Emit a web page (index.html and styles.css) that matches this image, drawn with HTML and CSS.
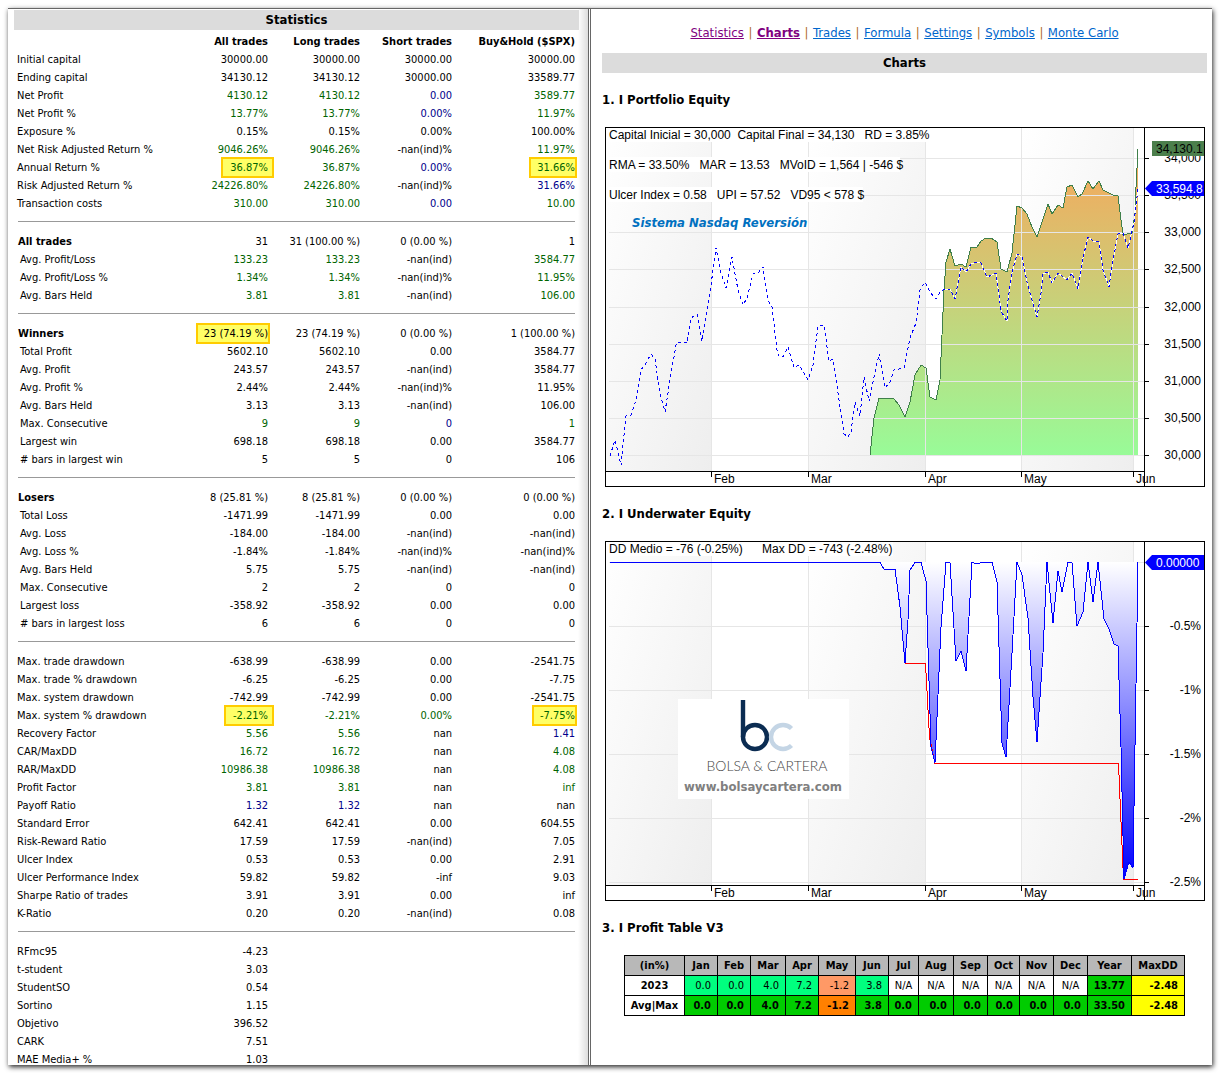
FILE: index.html
```html
<!DOCTYPE html>
<html lang="en">
<head>
<meta charset="utf-8">
<title>Backtest report</title>
<link rel="stylesheet" href="styles.css">
</head>
<body>
<main class="window">
<section class="pane stats-pane">
<h2 class="bar">Statistics</h2>
<table class="stats">
<colgroup><col><col class="num"><col class="num"><col class="num"><col class="wide"></colgroup>
<thead><tr><td></td><th scope="col">All trades</th><th scope="col">Long trades</th><th scope="col">Short trades</th><th scope="col">Buy&amp;Hold ($SPX)</th></tr></thead>
<tbody>
<tr><th scope="row">Initial capital</th><td>30000.00</td><td>30000.00</td><td>30000.00</td><td>30000.00</td></tr>
<tr><th scope="row">Ending capital</th><td>34130.12</td><td>34130.12</td><td>30000.00</td><td>33589.77</td></tr>
<tr><th scope="row">Net Profit</th><td class="good">4130.12</td><td class="good">4130.12</td><td class="flat">0.00</td><td class="good">3589.77</td></tr>
<tr><th scope="row">Net Profit %</th><td class="good">13.77%</td><td class="good">13.77%</td><td class="flat">0.00%</td><td class="good">11.97%</td></tr>
<tr><th scope="row">Exposure %</th><td>0.15%</td><td>0.15%</td><td>0.00%</td><td>100.00%</td></tr>
<tr><th scope="row">Net Risk Adjusted Return %</th><td class="good">9046.26%</td><td class="good">9046.26%</td><td>-nan(ind)%</td><td class="good">11.97%</td></tr>
<tr><th scope="row">Annual Return %</th><td class="good"><mark>36.87%</mark></td><td class="good">36.87%</td><td class="flat">0.00%</td><td class="good"><mark class="tight">31.66%</mark></td></tr>
<tr><th scope="row">Risk Adjusted Return %</th><td class="good">24226.80%</td><td class="good">24226.80%</td><td>-nan(ind)%</td><td class="flat">31.66%</td></tr>
<tr><th scope="row">Transaction costs</th><td class="good">310.00</td><td class="good">310.00</td><td class="flat">0.00</td><td class="good">10.00</td></tr>
<tr class="rule"><td colspan="5"><hr></td></tr>
</tbody>
<tbody class="group">
<tr><th scope="row">All trades</th><td>31</td><td>31 (100.00 %)</td><td>0 (0.00 %)</td><td>1</td></tr>
<tr><th scope="row">Avg. Profit/Loss</th><td class="good">133.23</td><td class="good">133.23</td><td>-nan(ind)</td><td class="good">3584.77</td></tr>
<tr><th scope="row">Avg. Profit/Loss %</th><td class="good">1.34%</td><td class="good">1.34%</td><td>-nan(ind)%</td><td class="good">11.95%</td></tr>
<tr><th scope="row">Avg. Bars Held</th><td class="good">3.81</td><td class="good">3.81</td><td>-nan(ind)</td><td class="good">106.00</td></tr>
<tr class="rule"><td colspan="5"><hr></td></tr>
</tbody>
<tbody class="group">
<tr><th scope="row">Winners</th><td><mark class="tight">23 (74.19 %)</mark></td><td>23 (74.19 %)</td><td>0 (0.00 %)</td><td>1 (100.00 %)</td></tr>
<tr><th scope="row">Total Profit</th><td>5602.10</td><td>5602.10</td><td>0.00</td><td>3584.77</td></tr>
<tr><th scope="row">Avg. Profit</th><td>243.57</td><td>243.57</td><td>-nan(ind)</td><td>3584.77</td></tr>
<tr><th scope="row">Avg. Profit %</th><td>2.44%</td><td>2.44%</td><td>-nan(ind)%</td><td>11.95%</td></tr>
<tr><th scope="row">Avg. Bars Held</th><td>3.13</td><td>3.13</td><td>-nan(ind)</td><td>106.00</td></tr>
<tr><th scope="row">Max. Consecutive</th><td class="good">9</td><td class="good">9</td><td class="flat">0</td><td class="good">1</td></tr>
<tr><th scope="row">Largest win</th><td>698.18</td><td>698.18</td><td>0.00</td><td>3584.77</td></tr>
<tr><th scope="row"># bars in largest win</th><td>5</td><td>5</td><td>0</td><td>106</td></tr>
<tr class="rule"><td colspan="5"><hr></td></tr>
</tbody>
<tbody class="group">
<tr><th scope="row">Losers</th><td>8 (25.81 %)</td><td>8 (25.81 %)</td><td>0 (0.00 %)</td><td>0 (0.00 %)</td></tr>
<tr><th scope="row">Total Loss</th><td>-1471.99</td><td>-1471.99</td><td>0.00</td><td>0.00</td></tr>
<tr><th scope="row">Avg. Loss</th><td>-184.00</td><td>-184.00</td><td>-nan(ind)</td><td>-nan(ind)</td></tr>
<tr><th scope="row">Avg. Loss %</th><td>-1.84%</td><td>-1.84%</td><td>-nan(ind)%</td><td>-nan(ind)%</td></tr>
<tr><th scope="row">Avg. Bars Held</th><td>5.75</td><td>5.75</td><td>-nan(ind)</td><td>-nan(ind)</td></tr>
<tr><th scope="row">Max. Consecutive</th><td>2</td><td>2</td><td>0</td><td>0</td></tr>
<tr><th scope="row">Largest loss</th><td>-358.92</td><td>-358.92</td><td>0.00</td><td>0.00</td></tr>
<tr><th scope="row"># bars in largest loss</th><td>6</td><td>6</td><td>0</td><td>0</td></tr>
<tr class="rule"><td colspan="5"><hr></td></tr>
</tbody>
<tbody>
<tr><th scope="row">Max. trade drawdown</th><td>-638.99</td><td>-638.99</td><td>0.00</td><td>-2541.75</td></tr>
<tr><th scope="row">Max. trade % drawdown</th><td>-6.25</td><td>-6.25</td><td>0.00</td><td>-7.75</td></tr>
<tr><th scope="row">Max. system drawdown</th><td>-742.99</td><td>-742.99</td><td>0.00</td><td>-2541.75</td></tr>
<tr><th scope="row">Max. system % drawdown</th><td class="good"><mark>-2.21%</mark></td><td class="good">-2.21%</td><td class="good">0.00%</td><td class="good"><mark class="tight">-7.75%</mark></td></tr>
<tr><th scope="row">Recovery Factor</th><td class="good">5.56</td><td class="good">5.56</td><td>nan</td><td class="flat">1.41</td></tr>
<tr><th scope="row">CAR/MaxDD</th><td class="good">16.72</td><td class="good">16.72</td><td>nan</td><td class="good">4.08</td></tr>
<tr><th scope="row">RAR/MaxDD</th><td class="good">10986.38</td><td class="good">10986.38</td><td>nan</td><td class="good">4.08</td></tr>
<tr><th scope="row">Profit Factor</th><td class="good">3.81</td><td class="good">3.81</td><td>nan</td><td class="good">inf</td></tr>
<tr><th scope="row">Payoff Ratio</th><td class="flat">1.32</td><td class="flat">1.32</td><td>nan</td><td>nan</td></tr>
<tr><th scope="row">Standard Error</th><td>642.41</td><td>642.41</td><td>0.00</td><td>604.55</td></tr>
<tr><th scope="row">Risk-Reward Ratio</th><td>17.59</td><td>17.59</td><td>-nan(ind)</td><td>7.05</td></tr>
<tr><th scope="row">Ulcer Index</th><td>0.53</td><td>0.53</td><td>0.00</td><td>2.91</td></tr>
<tr><th scope="row">Ulcer Performance Index</th><td>59.82</td><td>59.82</td><td>-inf</td><td>9.03</td></tr>
<tr><th scope="row">Sharpe Ratio of trades</th><td>3.91</td><td>3.91</td><td>0.00</td><td>inf</td></tr>
<tr><th scope="row">K-Ratio</th><td>0.20</td><td>0.20</td><td>-nan(ind)</td><td>0.08</td></tr>
<tr class="rule"><td colspan="5"><hr></td></tr>
</tbody>
<tbody>
<tr><th scope="row">RFmc95</th><td>-4.23</td></tr>
<tr><th scope="row">t-student</th><td>3.03</td></tr>
<tr><th scope="row">StudentSO</th><td>0.54</td></tr>
<tr><th scope="row">Sortino</th><td>1.15</td></tr>
<tr><th scope="row">Objetivo</th><td>396.52</td></tr>
<tr><th scope="row">CARK</th><td>7.51</td></tr>
<tr><th scope="row">MAE Media+ %</th><td>1.03</td></tr>
</tbody>
</table>
</section>

<section class="pane charts-pane">
<nav class="tabs">
<a class="seen" href="#statistics">Statistics</a><span class="sep">|</span>
<a class="seen current" href="#charts">Charts</a><span class="sep">|</span>
<a href="#trades">Trades</a><span class="sep">|</span>
<a href="#formula">Formula</a><span class="sep">|</span>
<a href="#settings">Settings</a><span class="sep">|</span>
<a href="#symbols">Symbols</a><span class="sep">|</span>
<a href="#montecarlo">Monte Carlo</a>
</nav>
<h2 class="bar">Charts</h2>

<h3>1. I Portfolio Equity</h3>
<svg class="chart" viewBox="605 127 600 360" role="img" aria-label="Portfolio equity">
<defs>
<linearGradient id="band" x1="0" y1="0" x2="1" y2="1"><stop offset="0" stop-color="#fff"/><stop offset="1" stop-color="#eee"/></linearGradient>
<linearGradient id="equity" gradientUnits="userSpaceOnUse" x1="0" y1="160" x2="0" y2="455"><stop offset="0" stop-color="#f4a95d"/><stop offset="1" stop-color="#98fb98"/></linearGradient>
</defs>
<rect x="605" y="127" width="600" height="360" fill="#fff"/>
<g fill="url(#band)"><rect x="606" y="128" width="105" height="343"/><rect x="809" y="128" width="116" height="343"/><rect x="1022" y="128" width="111" height="343"/></g>
<path d="M870 455L874 418L879 398L894 399L899 405L905 417L910 402L915 375L921 365L926 368L930 397L936 400L940 380L944 290L946 262L950 249L955 266L961 264L966 267L971 247L977 247L981 241L986 238L991 238L997 242L1001 269L1007 272L1012 253L1017 206L1022 208L1027 214L1032 227L1037 237L1043 219L1048 204L1052 214L1058 205L1063 208L1067 187L1072 185L1078 197L1082 194L1088 181L1093 189L1099 181L1103 190L1113 195L1118 196L1123 235L1132 233L1135 213L1136 187L1138 149V455Z" fill="url(#equity)"/>
<path class="grid" d="M609 158.500H1144M609 195.500H1144M609 232.500H1144M609 269.500H1144M609 307.500H1144M609 344.500H1144M609 381.500H1144M609 418.500H1144M609 455.500H1144M711.500 128V471M808.500 128V471M925.500 128V471M1021.500 128V471M1133.500 128V471"/>
<path class="line" stroke="#3f7f4a" d="M870 455L874 418L879 398L894 399L899 405L905 417L910 402L915 375L921 365L926 368L930 397L936 400L940 380L944 290L946 262L950 249L955 266L961 264L966 267L971 247L977 247L981 241L986 238L991 238L997 242L1001 269L1007 272L1012 253L1017 206L1022 208L1027 214L1032 227L1037 237L1043 219L1048 204L1052 214L1058 205L1063 208L1067 187L1072 185L1078 197L1082 194L1088 181L1093 189L1099 181L1103 190L1113 195L1118 196L1123 235L1132 233L1135 213L1136 187L1138 149"/>
<path class="line" stroke="#fff" d="M945 289L950 289L955 299L961 267L966 272L971 264L977 262L981 263L987 277L992 275L996 273L1001 310L1002 313L1007 321L1008 300L1012 273L1017 254L1022 257L1027 282L1032 300L1037 317L1041 293L1043 274L1048 272L1052 283L1058 273L1067 280L1072 273L1078 289L1083 258L1088 237L1093 241L1099 242L1103 270L1109 287L1113 260L1118 234L1123 233L1128 248L1134 223L1136 205L1138 189"/>
<path class="line dashed" stroke="#00f" d="M610 456L615 440L621 465L626 416L631 415L636 400L641 370L646 363L651 354L655 359L660 393L665 412L670 380L676 345L677 342L687 343L691 318L697 314L702 341L709 297L711 285L716 248L721 273L726 288L732 257L738 290L743 305L747 298L753 274L758 273L763 267L767 295L769 302L772 307L777 350L779 356L783 357L788 347L794 368L799 365L808 380L813 365L818 326L824 325L829 361L833 359L839 400L844 434L848 437L851 432L855 402L860 416L864 377L869 401L879 354L885 388L890 382L894 370L904 368L910 338L916 323L920 290L925 282L930 292L936 299L941 291L945 289L950 289L955 299L961 267L966 272L971 264L977 262L981 263L987 277L992 275L996 273L1001 310L1002 313L1007 321L1008 300L1012 273L1017 254L1022 257L1027 282L1032 300L1037 317L1041 293L1043 274L1048 272L1052 283L1058 273L1067 280L1072 273L1078 289L1083 258L1088 237L1093 241L1099 242L1103 270L1109 287L1113 260L1118 234L1123 233L1128 248L1134 223L1136 205L1138 189"/>
<g fill="#fff"><rect x="608" y="128" width="329" height="14"/><rect x="608" y="157" width="292" height="15"/><rect x="608" y="187" width="255" height="15"/></g>
<g class="note"><text x="609" y="139">Capital Inicial = 30,000&#160; Capital Final = 34,130&#160;&#160; RD = 3.85%</text><text x="609" y="169">RMA = 33.50%&#160;&#160; MAR = 13.53&#160;&#160; MVoID = 1,564 | -546 $</text><text x="609" y="199">Ulcer Index = 0.58&#160;&#160; UPI = 57.52&#160;&#160; VD95 &lt; 578 $</text></g>
<text class="caption" x="632" y="227">Sistema Nasdaq Reversión</text>
<g class="ylabels"><text x="1201" y="162">34,000</text><text x="1201" y="199">33,500</text><text x="1201" y="236">33,000</text><text x="1201" y="273">32,500</text><text x="1201" y="311">32,000</text><text x="1201" y="348">31,500</text><text x="1201" y="385">31,000</text><text x="1201" y="422">30,500</text><text x="1201" y="459">30,000</text></g>
<g class="note"><text x="714" y="483">Feb</text><text x="811" y="483">Mar</text><text x="928" y="483">Apr</text><text x="1024" y="483">May</text><text x="1136" y="483">Jun</text></g>
<path class="axis" d="M1144.500 128V487M605 471.500H1144M1144 158.500H1149M1144 195.500H1149M1144 232.500H1149M1144 269.500H1149M1144 307.500H1149M1144 344.500H1149M1144 381.500H1149M1144 418.500H1149M1144 455.500H1149M711.500 471V477M808.500 471V477M925.500 471V477M1021.500 471V477M1133.500 471V477"/>
<rect x="1152" y="141" width="53" height="15" fill="#4c7f4c"/>
<path d="M1145 188.500L1152 181H1205V196H1152Z" fill="#00f"/>
<text class="tag" x="1156" y="153">34,130.1</text><text class="tag light" x="1156" y="193">33,594.8</text>
<rect class="axis" x="605.500" y="127.500" width="599" height="359"/>
</svg>

<h3>2. I Underwater Equity</h3>
<svg class="chart" viewBox="605 541 600 360" role="img" aria-label="Underwater equity">
<defs><linearGradient id="water" gradientUnits="userSpaceOnUse" x1="0" y1="562" x2="0" y2="879"><stop offset="0" stop-color="#fff"/><stop offset="1" stop-color="#00f"/></linearGradient></defs>
<rect x="605" y="541" width="600" height="360" fill="#fff"/>
<g fill="url(#band)"><rect x="606" y="542" width="105" height="343"/><rect x="809" y="542" width="116" height="343"/><rect x="1022" y="542" width="111" height="343"/></g>
<path class="grid" d="M609 562.500H1144M609 626.500H1144M609 690.500H1144M609 754.500H1144M609 818.500H1144M609 882.500H1144M711.500 542V885M808.500 542V885M925.500 542V885M1021.500 542V885M1133.500 542V885"/>
<path d="M880 562L884 569L895 569L900 607L905 663L908 620L910 570L915 562L921 562L926 581L931 747L935 763L941 627L946 562L950 562L956 661L961 651L966 671L972 562L977 564L982 562L992 562L997 582L1002 743L1006 757L1012 653L1017 562L1022 575L1028 618L1033 697L1037 742L1043 653L1047 562L1053 623L1058 571L1062 592L1068 562L1072 562L1077 626L1083 612L1088 562L1093 602L1098 562L1104 619L1109 629L1114 644L1118 646L1121 747L1124 879L1129 862L1133 868L1138 562Z" fill="url(#water)"/>
<path class="line" stroke="#f00" d="M905 663.500H925.500L929.500 737L935 763.500H1118.500L1123 868L1124 879.500H1138"/>
<path class="line" stroke="#00f" d="M610 562.500L880 562.500L884 569L895 569L900 607L905 663L908 620L910 570L915 562.500L921 562.500L926 581L931 747L935 763L941 627L946 562.500L950 562.500L956 661L961 651L966 671L972 562.500L977 564L982 562.500L992 562.500L997 582L1002 743L1006 757L1012 653L1017 562L1022 575L1028 618L1033 697L1037 742L1043 653L1047 562L1053 623L1058 571L1062 592L1068 562.500L1072 562.500L1077 626L1083 612L1088 562L1093 602L1098 562L1104 619L1109 629L1114 644L1118 646L1121 747L1124 879L1129 862L1133 868L1138 562"/>
<rect x="608" y="542" width="285" height="14" fill="#fff"/>
<g class="note"><text x="609" y="553">DD Medio = -76 (-0.25%)</text><text x="762" y="553">Max DD = -743 (-2.48%)</text></g>
<g class="ylabels"><text x="1201" y="630">-0.5%</text><text x="1201" y="694">-1%</text><text x="1201" y="758">-1.5%</text><text x="1201" y="822">-2%</text><text x="1201" y="886">-2.5%</text></g>
<g class="note"><text x="714" y="897">Feb</text><text x="811" y="897">Mar</text><text x="928" y="897">Apr</text><text x="1024" y="897">May</text><text x="1136" y="897">Jun</text></g>
<path class="axis" d="M1144.500 542V901M605 885.500H1144M1144 626.500H1149M1144 690.500H1149M1144 754.500H1149M1144 818.500H1149M1144 882.500H1149M711.500 885V891M808.500 885V891M925.500 885V891M1021.500 885V891M1133.500 885V891"/>
<path d="M1145 562.500L1152 555H1205V570H1152Z" fill="#00f"/>
<text class="tag light" x="1156" y="567">0.00000</text>
<rect class="axis" x="605.500" y="541.500" width="599" height="359"/>
<rect x="678" y="699" width="171" height="100" fill="#fff"/>
<path d="M743 700V737" stroke="#0b2c52" stroke-width="4.400" fill="none"/><circle cx="755" cy="737" r="12" stroke="#0b2c52" stroke-width="4.400" fill="none"/>
<path d="M791.500 728.500A12 12 0 1 0 791.500 745.500" stroke="#c4d5e5" stroke-width="4.400" fill="none"/>
<text class="brand" x="767" y="771">BOLSA &amp; CARTERA</text>
<text class="site" x="763" y="791">www.bolsaycartera.com</text>
</svg>

<h3>3. I Profit Table V3</h3>
<table class="profit">
<colgroup><col style="width:60px"><col style="width:33px"><col style="width:33px"><col style="width:35px"><col style="width:33px"><col style="width:37px"><col style="width:33px"><col style="width:30px"><col style="width:35px"><col style="width:34px"><col style="width:32px"><col style="width:34px"><col style="width:34px"><col style="width:44px"><col style="width:53px"></colgroup>
<thead><tr><th>(in%)</th><th>Jan</th><th>Feb</th><th>Mar</th><th>Apr</th><th>May</th><th>Jun</th><th>Jul</th><th>Aug</th><th>Sep</th><th>Oct</th><th>Nov</th><th>Dec</th><th>Year</th><th>MaxDD</th></tr></thead>
<tbody>
<tr><th scope="row">2023</th><td class="up">0.0</td><td class="up">0.0</td><td class="up">4.0</td><td class="up">7.2</td><td class="down">-1.2</td><td class="up">3.8</td><td class="na">N/A</td><td class="na">N/A</td><td class="na">N/A</td><td class="na">N/A</td><td class="na">N/A</td><td class="na">N/A</td><td class="total">13.77</td><td class="maxdd">-2.48</td></tr>
<tr><th scope="row">Avg|Max</th><td class="total">0.0</td><td class="total">0.0</td><td class="total">4.0</td><td class="total">7.2</td><td class="total low">-1.2</td><td class="total">3.8</td><td class="total">0.0</td><td class="total">0.0</td><td class="total">0.0</td><td class="total">0.0</td><td class="total">0.0</td><td class="total">0.0</td><td class="total">33.50</td><td class="maxdd">-2.48</td></tr>
</tbody>
</table>
</section>
</main>
</body>
</html>
```
FILE: styles.css
```css
* { box-sizing: border-box; }

body {
  margin: 0;
  padding: 8px;
  background: #fff;
  color: #000;
  font: 11px/18px "DejaVu Sans Condensed", "DejaVu Sans", sans-serif;
}

.window {
  display: grid;
  grid-template-columns: 583fr 621fr;
  height: calc(100vh - 16px);
  border-top: 1px solid #666;
  background: #fff;
  box-shadow: 1px 2px 5px rgba(0, 0, 0, .85);
}

.pane {
  min-width: 0;
  overflow: auto;
  scrollbar-width: none;
}

.stats-pane {
  padding: 1px 9px 0 6px;
  border-right: 3px double #666;
  background: linear-gradient(to left, #ddd, #fff 10px);
}

.charts-pane { padding: 15px 5px 0 11px; }

.bar {
  margin: 0;
  background: #dcdcdc;
  font-size: 13px;
  line-height: 20px;
  text-align: center;
}

h3 {
  margin: 0;
  font-size: 13px;
  line-height: 54px;
}

/* Statistics */
.stats {
  width: calc(100% - 7px);
  margin: 3px 4px 0 3px;
  border-collapse: collapse;
  table-layout: fixed;
}

.num { width: 92px; }
.wide { width: 123px; }

.stats th,
.stats td {
  height: 18px;
  padding: 0;
  text-align: right;
  white-space: nowrap;
}

.stats tbody th {
  font-weight: normal;
  text-align: left;
}

.stats .group th { padding-left: 3px; }

.stats .group tr:first-child th {
  padding-left: 1px;
  font-weight: bold;
}

.stats .rule td {
  height: 20px;
  line-height: 1px;
  vertical-align: top;
}

hr {
  height: 1px;
  margin: 8px 0 0 1px;
  border: 0;
  background: #999;
}

.good { color: #006400; }
.flat { color: #00008b; }

mark {
  margin-right: -6px;
  padding: 2px 4px 2px 7px;
  border: 2px solid #fc0;
  background: #ff6;
  color: inherit;
}

mark.tight {
  margin-right: -2px;
  padding: 2px 0 2px 6px;
}

/* Report tabs */
.tabs {
  display: flex;
  justify-content: center;
  margin-bottom: 11px;
  font-size: 13px;
}

.tabs a { color: #06c; }
.tabs .seen { color: #800080; }
.tabs .current { font-weight: bold; }

.sep {
  width: 13px;
  color: #b06a1e;
  text-align: center;
}

/* Charts */
.chart {
  display: block;
  width: 600px;
  max-width: 100%;
  margin-left: 3px;
  font: 12px "Liberation Sans", sans-serif;
}

.grid { fill: none; stroke: #e6e6e6; }
.axis { fill: none; stroke: #000; }
.line { fill: none; stroke-width: 1; shape-rendering: crispEdges; }
.dashed { stroke-dasharray: 3 3; }
.ylabels { text-anchor: end; }
.light { fill: #fff; }

.caption {
  fill: #0070c0;
  font: italic bold 13px "DejaVu Sans Condensed", "DejaVu Sans", sans-serif;
}

.brand {
  fill: #444;
  font: 300 14px Lato, sans-serif;
  text-anchor: middle;
}

.site {
  fill: #808080;
  font: bold 13px "DejaVu Sans Condensed", "DejaVu Sans", sans-serif;
  text-anchor: middle;
}

/* Monthly profit */
.profit {
  width: 561px;
  margin: 0 auto;
  border-collapse: collapse;
  table-layout: fixed;
}

.profit th,
.profit td {
  height: 20px;
  padding: 0 6px 0 0;
  border: 1px solid #000;
  text-align: right;
}

.profit th {
  padding: 0;
  text-align: center;
}

.profit thead th { background: #b8b8b8; }
.profit .na { padding: 0; text-align: center; }
.up { background: #00ff7f; }
.down { background: #ff9966; }
.total { background: #00cc00; font-weight: bold; }
.low { background: #ff8000; }
.maxdd { background: #ff0; font-weight: bold; }
```
